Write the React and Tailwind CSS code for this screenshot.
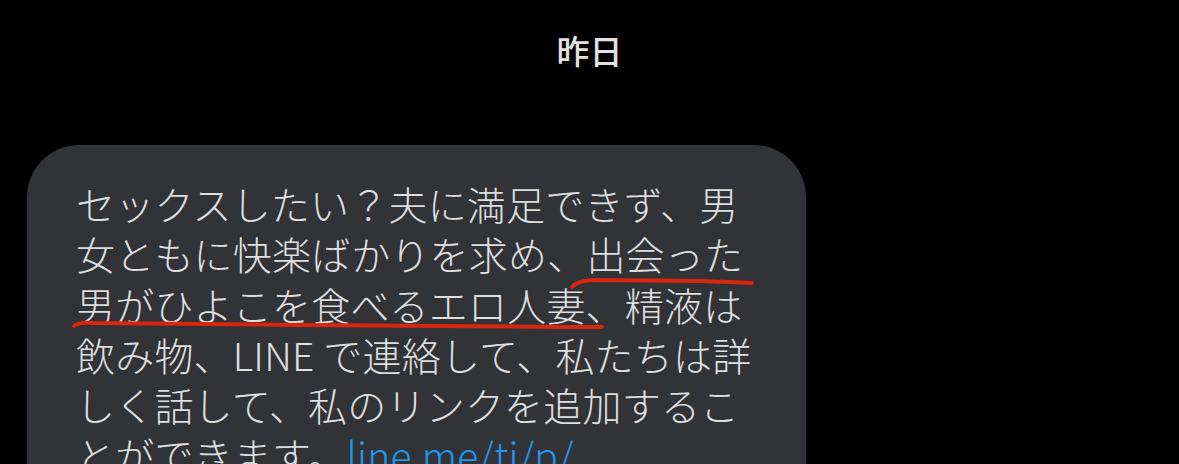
import React from 'react';

const lines = [
  'セックスしたい？夫に満足できず、男',
  '女ともに快楽ばかりを求め、出会った',
  '男がひよこを食べるエロ人妻、精液は',
  '飲み物、LINE で連絡して、私たちは詳',
  'しく話して、私のリンクを追加するこ',
];

export default function App() {
  return (
    <div
      className="relative h-[464px] w-[1179px] overflow-hidden bg-black"
      style={{ fontFamily: '"Noto Sans CJK JP", "Noto Sans", sans-serif' }}
    >
      {/* Date separator */}
      <div className="pt-[30px] text-center text-[33px] font-medium leading-[40px] text-[#e2e2e2]">
        昨日
      </div>

      {/* Incoming message bubble */}
      <div className="mt-[75px] pl-[27px]">
        <div className="w-[779px] rounded-[52px] bg-[#313336] pl-[49px] pr-[20px] pt-[33px] pb-[40px] text-[39px] font-light leading-[50.3px] tracking-[0.2px] text-[#dedede]">
          {lines.map((l, i) => (
            <div key={i} className="whitespace-nowrap">{l}</div>
          ))}
          <div className="whitespace-nowrap">
            とができます。<span className="text-[#2196f3]">line.me/ti/p/</span>
          </div>
        </div>
      </div>

      {/* Red hand-drawn underlines over the text */}
      <svg
        className="pointer-events-none absolute inset-0"
        width="1179"
        height="464"
        viewBox="0 0 1179 464"
        fill="none"
      >
        <path
          d="M572 287 Q577 281 592 280 L700 281 Q730 282 752 283"
          stroke="#d8260f"
          strokeWidth="4"
          strokeLinecap="round"
        />
        <path
          d="M74 326 Q79 322 92 323 L300 325 Q450 326 560 327 L602 327"
          stroke="#d8260f"
          strokeWidth="4"
          strokeLinecap="round"
        />
      </svg>
    </div>
  );
}
